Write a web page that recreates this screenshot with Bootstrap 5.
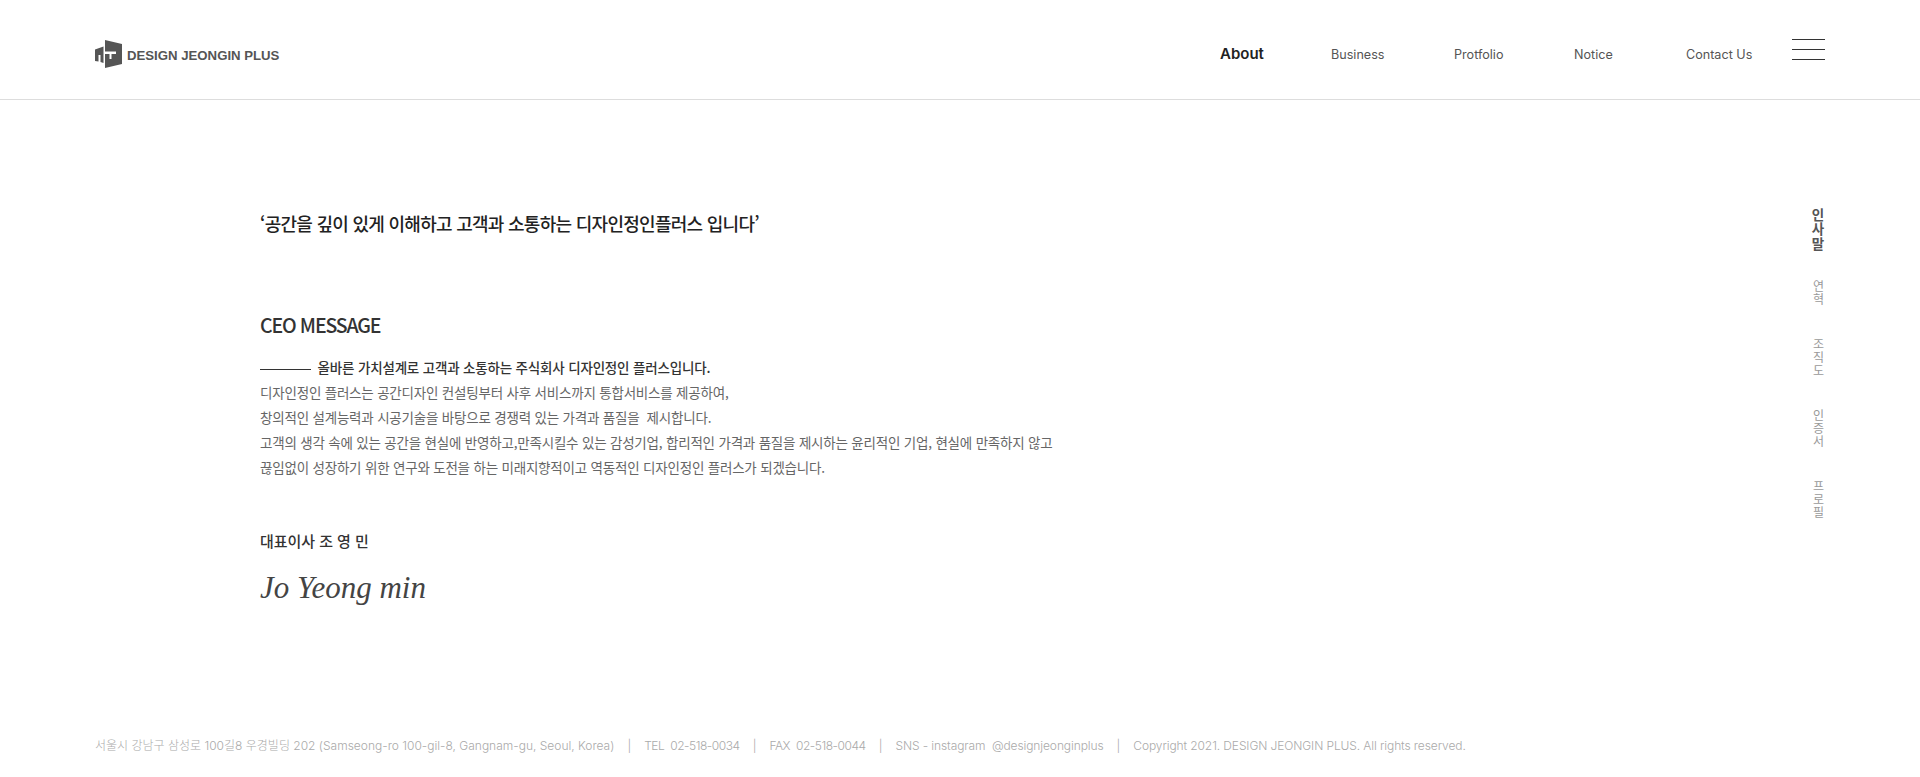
<!DOCTYPE html>
<html lang="ko">

<head>
    <meta charset="UTF-8">
    <meta name="viewport" content="width=device-width, initial-scale=1.0">
    <title>About - Design Jeongin Plus</title>
    <link href="https://cdn.jsdelivr.net/npm/bootstrap@5.3.2/dist/css/bootstrap.min.css" rel="stylesheet">
    <style>
        body {
            font-family: "Noto Sans CJK KR", "Liberation Sans", sans-serif;
            background: #fff;
            color: #222;
            height: 777px;
            overflow: hidden;
        }

        .site-head {
            height: 100px;
            padding: 0 95px;
            border-bottom: 1px solid #ddd;
        }

        .logo-word {
            font-family: "Liberation Sans", sans-serif;
            font-size: 13.2px;
            font-weight: 700;
            color: #555;
            margin: 12px 0 0 5px;
        }

        .head-menu {
            display: grid;
            grid-template-columns: 111px 123px 120px 112px 105px 34px;
            align-items: start;
            padding-top: 39px;
        }

        .head-menu a {
            font-family: Inter, sans-serif;
            font-size: 12.6px;
            line-height: 32px;
            color: #555;
            text-decoration: none;
            white-space: nowrap;
        }

        .head-menu a.on {
            font-size: 15px;
            font-weight: 600;
            color: #222;
            line-height: 30px;
        }

        .burger {
            height: 21px;
            width: 33px;
            justify-self: end;
            border-top: 1px solid #333;
            border-bottom: 1px solid #333;
            position: relative;
        }

        .burger::after {
            content: "";
            position: absolute;
            left: 0;
            right: 0;
            top: 9px;
            border-top: 1px solid #333;
        }

        .page-body {
            height: 625px;
            padding: 108px 95px 0 260px;
        }

        .quote {
            font-size: 18px;
            font-weight: 500;
            line-height: 30px;
            letter-spacing: -.72px;
            color: #222;
            margin-bottom: 72px;
        }

        .msg-title {
            font-size: 19.5px;
            font-weight: 500;
            line-height: 30px;
            letter-spacing: -1.15px;
            color: #333;
            margin-bottom: 14px;
        }

        .msg-text {
            font-size: 13.5px;
            line-height: 25px;
            letter-spacing: -.2px;
            color: #666;
            margin-bottom: 50px;
            padding-top: 1px;
        }

        .msg-text strong {
            font-weight: 500;
            letter-spacing: -.18px;
            color: #333;
        }

        .msg-rule {
            display: inline-block;
            width: 51px;
            border-top: 1px solid #333;
            vertical-align: middle;
            margin-right: 3px;
        }

        .ceo-name {
            font-size: 15px;
            font-weight: 500;
            line-height: 22px;
            letter-spacing: -.05px;
            color: #333;
            margin-bottom: 16px;
        }

        .signature {
            font-family: "Liberation Serif", serif;
            font-style: italic;
            font-size: 31px;
            line-height: 40px;
            color: #444;
        }

        .side-menu {
            width: 14px;
            gap: 32px;
            font-size: 12px;
            letter-spacing: 1px;
            line-height: 14px;
            color: #999;
        }

        .side-menu span {
            writing-mode: vertical-rl;
            text-orientation: upright;
            display: block;
        }

        .side-menu span.on {
            font-size: 13.5px;
            font-weight: 700;
            color: #555;
            margin-bottom: -4px;
        }

        .site-foot {
            height: 52px;
            padding: 3px 95px 0;
            font-family: Inter, "Noto Sans CJK KR", sans-serif;
            font-size: 12px;
            line-height: 36px;
            font-weight: 300;
            color: #aaa;
            white-space: nowrap;
        }

        .foot-bar {
            margin: 0 13px;
        }

        .foot-num {
            letter-spacing: -.45px;
        }

        .foot-txt {
            letter-spacing: -.1px;
        }
    </style>
</head>

<body>
    <header class="site-head d-flex justify-content-between">
        <a href="#" class="d-flex align-items-center text-decoration-none">
            <svg width="27" height="28" viewBox="0 0 27 28" class="mt-2">
                <path fill="#555" d="M0 9.500 8.500 6.500V23L5.500 22V15H3.500V21.500L0 21Z" />
                <path fill="#555" fill-rule="evenodd" d="M10 0 27 4V24L10 28ZM10 11.500V14H14.500V19H16.500V14H21V11.500Z" />
            </svg>
            <span class="logo-word">DESIGN JEONGIN PLUS</span>
        </a>
        <nav class="head-menu">
            <a href="#" class="on">About</a>
            <a href="#">Business</a>
            <a href="#">Protfolio</a>
            <a href="#">Notice</a>
            <a href="#">Contact Us</a>
            <div class="burger"></div>
        </nav>
    </header>

    <main class="page-body d-flex justify-content-between">
        <section>
            <h2 class="quote">‘공간을 깊이 있게 이해하고 고객과 소통하는 디자인정인플러스 입니다’</h2>
            <h3 class="msg-title">CEO MESSAGE</h3>
            <p class="msg-text">
                <span class="msg-rule"></span> <strong>올바른 가치설계로 고객과 소통하는 주식회사 디자인정인 플러스입니다.</strong><br>
                디자인정인 플러스는 공간디자인 컨설팅부터 사후 서비스까지 통합서비스를 제공하여,<br>
                창의적인 설계능력과 시공기술을 바탕으로 경쟁력 있는 가격과 품질을 &nbsp;제시합니다.<br>
                고객의 생각 속에 있는 공간을 현실에 반영하고,만족시킬수 있는 감성기업, 합리적인 가격과 품질을 제시하는 윤리적인 기업, 현실에 만족하지 않고<br>
                끊임없이 성장하기 위한 연구와 도전을 하는 미래지향적이고 역동적인 디자인정인 플러스가 되겠습니다.
            </p>
            <p class="ceo-name">대표이사 조 영 민</p>
            <div class="signature">Jo Yeong min</div>
        </section>
        <aside class="side-menu d-flex flex-column">
            <span class="on">인사말</span>
            <span>연혁</span>
            <span>조직도</span>
            <span>인증서</span>
            <span>프로필</span>
        </aside>
    </main>

    <footer class="site-foot"><span>서울시 강남구 삼성로 100길8 우경빌딩 202 (Samseong-ro 100-gil-8, Gangnam-gu, Seoul, Korea)</span><span class="foot-bar">|</span><span class="foot-num">TEL&nbsp; 02-518-0034</span><span class="foot-bar">|</span><span class="foot-num">FAX&nbsp; 02-518-0044</span><span class="foot-bar">|</span><span class="foot-txt">SNS - instagram&nbsp; @designjeonginplus</span><span class="foot-bar">|</span><span class="foot-txt">Copyright 2021. DESIGN JEONGIN PLUS. All rights reserved.</span></footer>

    <script src="https://cdn.jsdelivr.net/npm/bootstrap@5.3.2/dist/js/bootstrap.bundle.min.js"></script>
</body>

</html>
